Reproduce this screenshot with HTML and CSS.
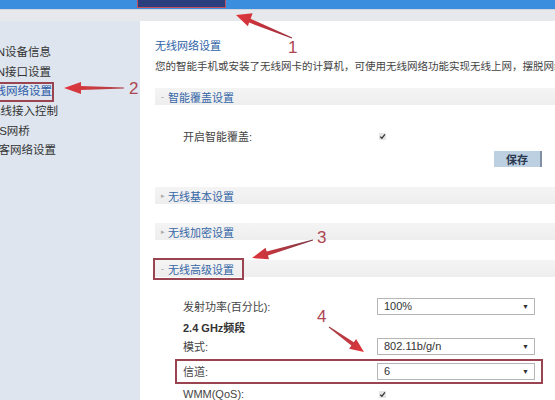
FILE: index.html
```html
<!DOCTYPE html>
<html lang="zh-CN">
<head>
<meta charset="utf-8">
<title>无线网络设置</title>
<link rel="stylesheet" href="styles.css">
</head>
<body>
<div class="page">
  <div class="topbar"><div class="nav-active"></div></div>
  <div class="strip"></div>
  <div class="layout">
    <aside class="sidebar">
      <div class="side-item i1">LAN设备信息</div>
      <div class="side-item i2">LAN接口设置</div>
      <div class="side-item i3 active">无线网络设置</div>
      <div class="side-item i4">无线接入控制</div>
      <div class="side-item i5">WDS网桥</div>
      <div class="side-item i6">访客网络设置</div>
    </aside>
    <main class="content">
      <h1 class="title">无线网络设置</h1>
      <p class="desc">您的智能手机或安装了无线网卡的计算机，可使用无线网络功能实现无线上网，摆脱网线的束缚。</p>

      <div class="sec sec-1"><span class="sign">-</span>智能覆盖设置</div>
      <div class="row row-smart">
        <span class="label">开启智能覆盖:</span>
        <span class="check"><svg width="7" height="7" viewBox="0 0 7 7"><rect x="0" y="0" width="7" height="7" fill="#e6e6e6"/><path d="M1.2 3.6 L2.9 5.3 L5.9 1.4" fill="none" stroke="#333" stroke-width="1.3"/></svg></span>
      </div>
      <div class="btn-row"><button class="btn">保存</button></div>

      <div class="sec sec-2"><span class="sign tri">▸</span>无线基本设置</div>
      <div class="sec sec-3"><span class="sign tri">▸</span>无线加密设置</div>
      <div class="sec sec-4"><span class="sign">-</span>无线高级设置</div>

      <div class="row r-power">
        <span class="label">发射功率(百分比):</span>
        <div class="select"><span>100%</span><span class="arrow">▼</span></div>
      </div>
      <div class="row r-band">
        <span class="label band">2.4 GHz频段</span>
      </div>
      <div class="row r-mode">
        <span class="label">模式:</span>
        <div class="select"><span>802.11b/g/n</span><span class="arrow">▼</span></div>
      </div>
      <div class="row r-chan">
        <span class="label">信道:</span>
        <div class="select"><span>6</span><span class="arrow">▼</span></div>
      </div>
      <div class="row r-wmm">
        <span class="label">WMM(QoS):</span>
        <span class="check"><svg width="7" height="7" viewBox="0 0 7 7"><rect x="0" y="0" width="7" height="7" fill="#e6e6e6"/><path d="M1.2 3.6 L2.9 5.3 L5.9 1.4" fill="none" stroke="#333" stroke-width="1.3"/></svg></span>
      </div>
    </main>
  </div>

  <div class="ann ann-side"></div>
  <div class="ann ann-adv"></div>
  <div class="ann ann-chan"></div>

  <svg class="arrows" width="555" height="400" viewBox="0 0 555 400">
    <defs>
      <linearGradient id="g1" x1="292" y1="38" x2="236" y2="15" gradientUnits="userSpaceOnUse">
        <stop offset="0" stop-color="#9a3040"/><stop offset="1" stop-color="#e0353a"/>
      </linearGradient>
      <linearGradient id="g2" x1="124" y1="88" x2="64" y2="88" gradientUnits="userSpaceOnUse">
        <stop offset="0" stop-color="#b04048"/><stop offset="1" stop-color="#e0353a"/>
      </linearGradient>
      <linearGradient id="g3" x1="313" y1="240" x2="252" y2="258" gradientUnits="userSpaceOnUse">
        <stop offset="0" stop-color="#7a3a48"/><stop offset="1" stop-color="#e0353a"/>
      </linearGradient>
      <linearGradient id="g4" x1="329" y1="327" x2="364" y2="352" gradientUnits="userSpaceOnUse">
        <stop offset="0" stop-color="#a04048"/><stop offset="1" stop-color="#e0353a"/>
      </linearGradient>
    </defs>
    <polygon fill="url(#g1)" points="292.2,37.5 250.6,18.8 252.6,13.2 236,15 247.9,26.3 249.1,22.6 291.8,38.5"/>
    <polygon fill="url(#g2)" points="124,87.5 81,86 81,82 64,88 81,94 81,90 124,88.5"/>
    <polygon fill="url(#g3)" points="312.9,239.5 266.7,251.6 265.6,247.7 252,258 269,259.3 267.9,255.4 313.1,240.5"/>
    <polygon fill="url(#g4)" points="328.7,327.4 351.4,345.5 349.1,348.8 364,352 356.1,339 353.8,342.3 329.3,326.6"/>
    <text class="num" x="288" y="53">1</text>
    <text class="num" x="129" y="94">2</text>
    <text class="num" x="317" y="243">3</text>
    <text class="num" x="317" y="322">4</text>
  </svg>
</div>
</body>
</html>
```
FILE: styles.css
```css
* { box-sizing: border-box; margin: 0; padding: 0; }
html, body { width: 555px; height: 400px; overflow: hidden; background: #fff; }
body {
  font-family: "Liberation Sans", "Noto Sans CJK SC", sans-serif;
  font-size: 11px;
  color: #444;
}
.page { position: relative; width: 555px; height: 400px; overflow: hidden; }

.topbar {
  height: 9px;
  background: #3b8dde;
  display: flex;
  padding-left: 137px;
}
.nav-active {
  width: 89px;
  height: 8px;
  background: #2a3d7c;
  border: 1px solid #c4505c;
  border-top: none;
}
.strip {
  height: 12px;
  background: #e7e8eb;
  border-top: 1px solid #d3d6dc;
}

.layout { display: flex; height: 379px; }

.sidebar {
  width: 140px;
  flex-shrink: 0;
  background: #dee5ee;
  padding-top: 22px;
  overflow: hidden;
}
.side-item {
  height: 19.7px;
  line-height: 19.7px;
  font-size: 11.5px;
  color: #333;
  white-space: nowrap;
}
.i1, .i2 { margin-left: -17.4px; }
.i3 { margin-left: -17px; color: #2a5aa6; }
.i4 { margin-left: -11px; }
.i5 { margin-left: -20px; }
.i6 { margin-left: -13px; }

.content {
  flex: 1;
  padding: 17px 0 0 15px;
  overflow: hidden;
  background: #fff;
}
.title {
  font-size: 11px;
  font-weight: normal;
  color: #2f63a6;
  line-height: 16px;
}
.desc {
  margin-top: 4px;
  line-height: 16px;
  font-size: 10.5px;
  white-space: nowrap;
  color: #444;
}

.sec {
  height: 17px;
  background: linear-gradient(#f4f4f4, #eeeeee);
  display: flex;
  align-items: center;
  padding-left: 6px;
  color: #3567a7;
  font-size: 11px;
}
.sign { width: 7px; font-size: 9px; color: #999; }
.tri { font-size: 7px; color: #aaa; }
.sec-1 { margin-top: 14px; }
.sec-2 { margin-top: 20px; }
.sec-3 { margin-top: 19px; }
.sec-4 { margin-top: 20px; }

.row {
  display: grid;
  grid-template-columns: 194px 158px;
  padding-left: 28px;
  align-items: center;
  height: 18px;
}
.label { color: #444; font-size: 11px; white-space: nowrap; }
.band { font-weight: bold; color: #333; }
.check { display: flex; align-items: center; padding-left: 2px; }
.check svg { display: block; }

.row-smart { margin-top: 22px; }
.btn-row { margin-top: 6px; padding-left: 339px; }
.btn {
  display: block;
  width: 48px;
  height: 16px;
  background: #bcd0e2;
  border: none;
  border-right: 2px solid #7f90a4;
  font-family: "Liberation Serif", "Noto Sans CJK SC", serif;
  font-weight: bold;
  font-size: 11px;
  color: #2c3950;
}

.r-power { margin-top: 20px; }
.r-band { margin-top: 4px; height: 16px; }
.r-mode { margin-top: 2px; }
.r-chan { margin-top: 7px; }
.r-wmm { margin-top: 5px; }

.select {
  height: 17px;
  border: 1px solid #b5b5b5;
  background: #fff;
  display: flex;
  justify-content: space-between;
  align-items: center;
  padding: 0 5px 0 6px;
  font-size: 11px;
  color: #333;
}
.arrow { font-size: 7px; color: #333; }

.ann {
  position: absolute;
  border: 2px solid #9a4452;
}
.ann-side { left: -4px; top: 82px; width: 58px; height: 20px; }
.ann-adv { left: 153px; top: 258px; width: 91px; height: 22px; }
.ann-chan { left: 175px; top: 359px; width: 368px; height: 25px; }

.arrows { position: absolute; left: 0; top: 0; pointer-events: none; }
.num {
  font-family: "Liberation Sans", sans-serif;
  font-size: 17px;
  fill: #ad4652;
}
```
